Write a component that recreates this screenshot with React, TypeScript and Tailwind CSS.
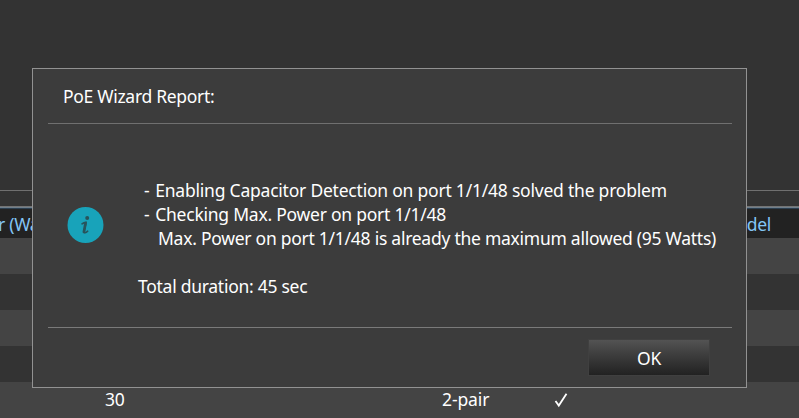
const report = [
  { dash: true, text: "Enabling Capacitor Detection on port 1/1/48 solved the problem", style: "pl-[6px] tracking-[-0.22px]" },
  { dash: true, text: "Checking Max. Power on port 1/1/48", style: "pl-[6px] tracking-[-0.24px]" },
  { dash: false, text: "Max. Power on port 1/1/48 is already the maximum allowed (95 Watts)", style: "pl-[20px] tracking-[-0.26px]" },
  { dash: false, text: "\u00a0", style: "" },
  { dash: false, text: "Total duration: 45 sec", style: "tracking-[-0.27px]" },
];

function InfoIcon() {
  return (
    <svg width="37" height="37" viewBox="0 0 37 37" className="shrink-0">
      <circle cx="18.5" cy="18" r="18" fill="#18a3ba" />
      <circle cx="20.2" cy="11.1" r="2" fill="#28545c" />
      <path
        d="M15 16.8c1.2-.9 2.4-1.3 4.1-1.4-.3 2.8-1.7 6.6-2 9.3-.2 1.8 1.8 1.1 3.6-.5"
        fill="none"
        stroke="#28545c"
        strokeWidth="1.6"
        strokeLinecap="round"
      />
      <path d="M18.5 16.2l-1.6 8.8" stroke="#28545c" strokeWidth="2.7" strokeLinecap="round" />
    </svg>
  );
}

function Dialog() {
  return (
    <section className="absolute left-8 top-[68px] flex h-80 w-[715px] flex-col border border-[#929292] bg-[#3c3c3c] pl-[15px] pr-[14px]">
      <header className="flex h-[54px] shrink-0 items-center pl-[15px] pt-px">
        <h1 className="tracking-[-0.3px]">PoE Wizard Report:</h1>
      </header>
      <div className="h-px shrink-0 bg-[#707070]" />
      <div className="flex h-[203px] shrink-0 items-center pb-px pl-[19px]">
        <InfoIcon />
        <div className="ml-[34px] mt-[26px] whitespace-nowrap leading-6">
          {report.map((line, i) => (
            <p key={i} className={line.style}>
              {line.dash && <span className="mr-[1.5px]">- </span>}
              {line.text}
            </p>
          ))}
        </div>
      </div>
      <div className="h-px shrink-0 bg-[#7a7a7a]" />
      <footer className="flex justify-end pr-[22px] pt-[11px]">
        <button className="h-[37px] w-[122px] border border-[#404040] bg-linear-to-b from-[#535353] to-[#222222] pt-px tracking-[-0.2px]">OK</button>
      </footer>
    </section>
  );
}

export default function App() {
  return (
    <main className="relative h-[418px] w-[799px] overflow-hidden bg-[#333333] font-['Noto_Sans',sans-serif] text-[17.5px] text-white">
      <div className="h-[190px]" />
      <div className="h-px bg-[#707070]" />
      <div className="h-[15px]" />
      <div className="h-px bg-[#747474]" />
      <div className="h-px bg-[#6f7f8c]" />
      <div className="flex h-[30px] items-center justify-between border-t border-[#2c3f50] bg-[#222222] pt-[2px] text-[#83c5f5]">
        <span className="-ml-[2px] tracking-[-0.3px]">r (Watts)</span>
        <span className="mr-[28px] tracking-[-0.3px]">Model</span>
      </div>
      <div className="h-9 bg-[#444444]" />
      <div className="h-9" />
      <div className="h-9 bg-[#444444]" />
      <div className="h-9" />
      <div className="flex h-9 items-center whitespace-nowrap bg-[#444444] pb-px">
        <span className="w-[337px] pl-[105px] tracking-[-0.38px]">30</span>
        <span className="w-[112px] pl-[105px] tracking-[-0.1px]">2-pair</span>
        <svg width="14" height="16" viewBox="0 0 14 16" className="ml-[105px]">
          <path d="M1.5 9l3.3 4.6L12.5 1.8" fill="none" stroke="white" strokeWidth="1.8" />
        </svg>
      </div>
      <Dialog />
    </main>
  );
}
